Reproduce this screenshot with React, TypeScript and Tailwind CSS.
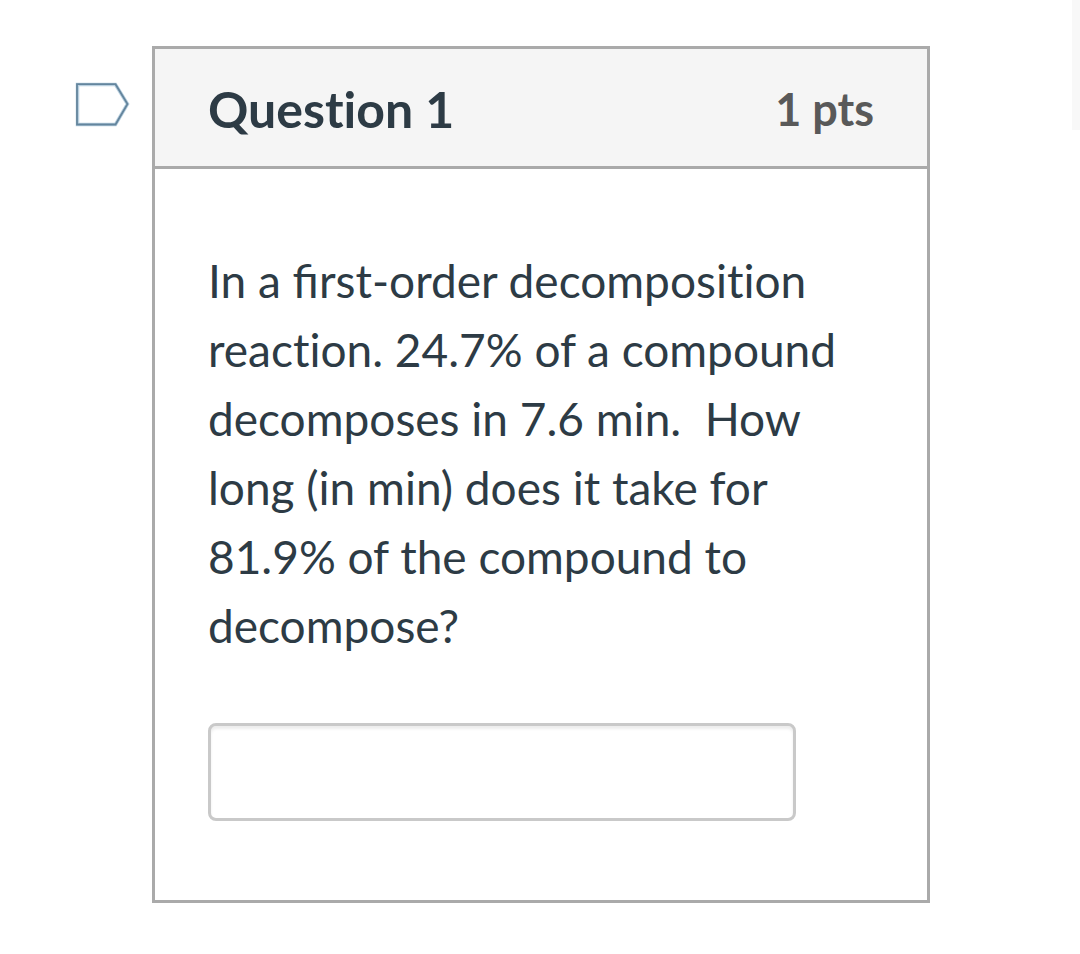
export default function App() {
  return (
    <div className="relative min-h-screen bg-white font-['Lato',sans-serif] text-[#2d3b45]">
      <div className="absolute top-0 right-0 h-[130px] w-2 bg-[#f8f8f8]" />
      <main className="flex items-start pt-[46px] pr-[150px] pl-[76px]">
        <button type="button" aria-label="Flag question 1" className="mt-9 mr-6 w-[52px] shrink-0">
          <svg viewBox="0 0 52 44" className="block w-full overflow-visible" fill="none">
            <path d="M1.5 2.500H39.500L51.500 22L39.500 42.500H1.500Z" stroke="#b9d0e0" strokeWidth="3.500" />
            <path d="M1 2.200H39.500L51.500 22L39.500 42.500H1Z" stroke="#64859d" strokeWidth="1.800" />
          </svg>
        </button>
        <section className="min-w-0 flex-1 border-3 border-[#aaaaaa]">
          <header className="flex items-center justify-between border-b-3 border-[#aaaaaa] bg-[#f5f5f5] px-[53px] pt-[26px] pb-[22px]">
            <h1 className="text-[50px] leading-[69px] font-bold [font-variant-ligatures:none]">Question 1</h1>
            <span className="text-[45px] leading-[69px] font-bold text-[#595959]">1 pts</span>
          </header>
          <div className="px-[53px] pt-[77px] pb-[79px]">
            <p id="question" className="text-[46px] leading-[69px]">
              In a first-order <span className="[font-variant-ligatures:none]">decomposition</span>{" "}
              <span className="[font-variant-ligatures:none]">reaction</span>. 24.7% of a compound decomposes in 7.6 min.&nbsp; How long (in min) does it take for 81.9% of the compound to decompose?
            </p>
            <input
              type="text"
              aria-labelledby="question"
              className="mt-[63px] block h-[98px] w-[588px] max-w-full rounded-lg border-3 border-[#c9c9c9] bg-white px-5 text-[46px] shadow-[inset_0_3px_3px_rgba(0,0,0,0.075)] outline-none"
            />
          </div>
        </section>
      </main>
    </div>
  );
}
